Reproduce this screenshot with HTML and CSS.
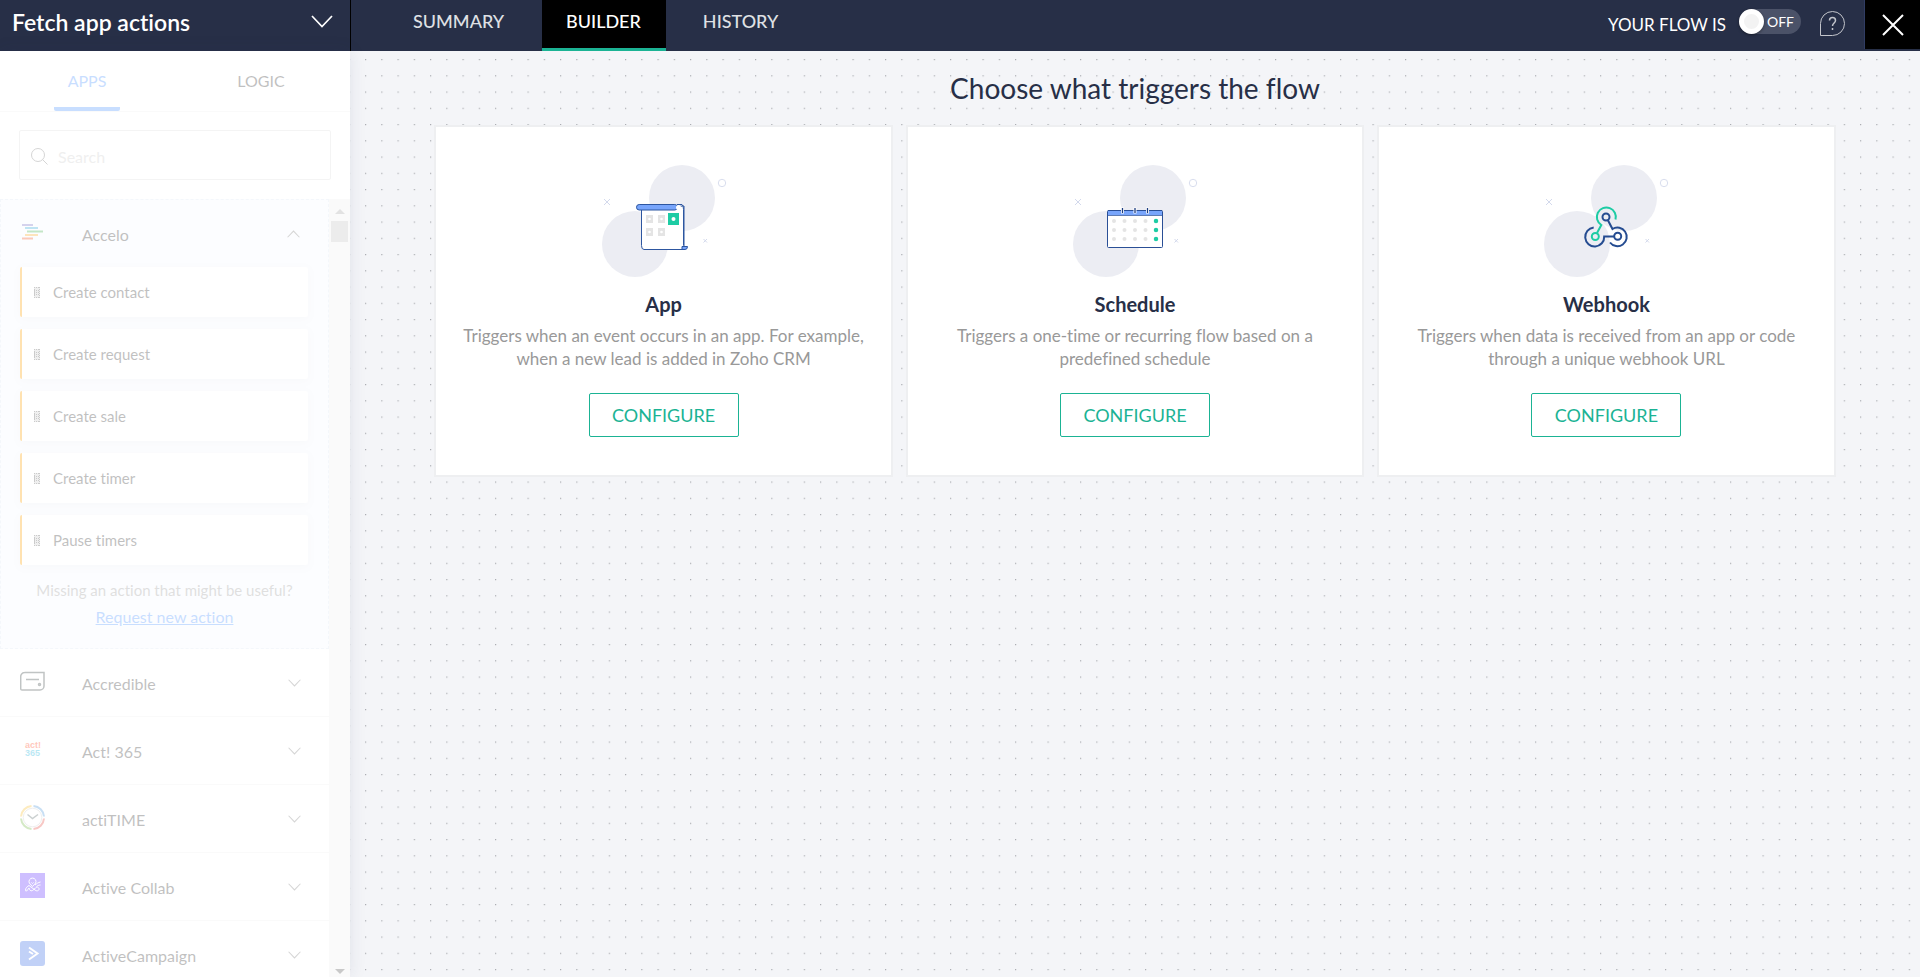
FILE: index.html
```
<!DOCTYPE html>
<html lang="en">
<head>
    <meta charset="UTF-8">
    <meta name="viewport" content="width=device-width, initial-scale=1.0">
    <title>Fetch app actions</title>
    <link rel="stylesheet" href="styles.css">
</head>
<body>

    <!-- shared shapes -->
    <svg class="sprite" aria-hidden="true">
        <symbol id="backdrop" viewBox="0 0 128 114">
            <circle cx="82" cy="34" r="33" fill="#ecedf3"/>
            <circle cx="35" cy="80" r="33" fill="#ecedf3"/>
            <circle cx="122" cy="19" r="3.7" fill="none" stroke="#d9deee"/>
            <path d="M4 35l6 6m0-6l-6 6M103.500 75l3.500 3.500m0-3.500l-3.500 3.500" fill="none" stroke="#d3d9ec"/>
        </symbol>
        <symbol id="arrow" viewBox="0 0 22 13">
            <path d="M1 1l10 10.500L21 1" fill="none" stroke="currentColor" stroke-width="1.700"/>
        </symbol>
        <symbol id="grip" viewBox="0 0 6 11">
            <path d="M0 0h6v11H0z" fill="#ccc"/>
            <path d="M0 .5h6M0 3.500h6M0 5.500h6M0 7.500h6M0 10.500h6M.5 0v11M5.500 0v11" fill="none" stroke="#555" stroke-dasharray="1 1"/>
        </symbol>
    </svg>

    <header class="topbar">
        <div class="flow-name">
            <h1>Fetch app actions</h1>
            <button class="icon-button" aria-label="Flow details"><svg class="name-arrow"><use href="#arrow"/></svg></button>
        </div>
        <nav class="main-tabs">
            <a href="#">SUMMARY</a>
            <a href="#" class="active">BUILDER</a>
            <a href="#">HISTORY</a>
        </nav>
        <div class="top-right">
            <span class="status-label" id="flow-status">YOUR FLOW IS</span>
            <label class="switch">
                <input type="checkbox" aria-labelledby="flow-status">
                <span class="switch-text">OFF</span>
            </label>
            <button class="icon-button" aria-label="Help">
                <svg class="help-icon" viewBox="0 0 25 25" fill="none" stroke="#c3c5cb">
                    <path d="M.5 24.500V12.500a12 12 0 1 1 12 12z"/>
                    <path d="M9.500 9.500c0-4 6-4 6 0 0 2.500-3 2.500-3 5.500M12.500 17v2" stroke-width="1.500"/>
                </svg>
            </button>
        </div>
        <button class="close-button" aria-label="Close">
            <svg class="close-icon" viewBox="0 0 22 22"><path d="M1 1l20 20M21 1L1 21" fill="none" stroke="#fff" stroke-width="2"/></svg>
        </button>
    </header>

    <div class="workspace">
        <aside class="sidebar">
            <div class="sidebar-inner">
                <div class="side-tabs">
                    <button class="side-tab active"><span>APPS</span></button>
                    <button class="side-tab"><span>LOGIC</span></button>
                </div>

                <label class="search">
                    <svg class="search-icon" viewBox="0 0 17 17" fill="none" stroke="#777"><circle cx="7" cy="7" r="6.500"/><path d="M11.500 11.500l5 5"/></svg>
                    <input type="text" placeholder="Search" aria-label="Search">
                </label>

                <div class="app-scroll">
                    <div class="app-list">
                        <section class="app-group">
                            <button class="app-row">
                                <svg class="app-icon" viewBox="0 0 25 25" fill="none" stroke-width="2">
                                    <path d="M2 5h11" stroke="#7771c4"/>
                                    <path d="M5 8h13" stroke="#2fa8d8"/>
                                    <path d="M7 11.500h16" stroke="#3fb04a"/>
                                    <path d="M5 15h13" stroke="#f9a825"/>
                                    <path d="M2 18.500h11" stroke="#f4511e"/>
                                </svg>
                                <span class="app-name">Accelo</span>
                                <svg class="row-arrow up"><use href="#arrow"/></svg>
                            </button>
                            <ul class="actions">
                                <li><svg class="grip"><use href="#grip"/></svg>Create contact</li>
                                <li><svg class="grip"><use href="#grip"/></svg>Create request</li>
                                <li><svg class="grip"><use href="#grip"/></svg>Create sale</li>
                                <li><svg class="grip"><use href="#grip"/></svg>Create timer</li>
                                <li><svg class="grip"><use href="#grip"/></svg>Pause timers</li>
                            </ul>
                            <p class="missing">Missing an action that might be useful?</p>
                            <a href="#" class="request">Request new action</a>
                        </section>

                        <button class="app-row">
                            <svg class="app-icon" viewBox="0 0 25 25" fill="none" stroke="#333f3f" stroke-width="1.500">
                                <path d="M4.500 3.500h19.500v13.500a4 4 0 0 1-4 4H2a1.300 1.300 0 0 1-1.300-1.300V7.500a4 4 0 0 1 4-4zM6 10.500h13"/>
                                <circle cx="19.500" cy="15.500" r="1"/>
                            </svg>
                            <span class="app-name">Accredible</span>
                            <svg class="row-arrow"><use href="#arrow"/></svg>
                        </button>
                        <button class="app-row">
                            <svg class="app-icon act" viewBox="0 0 25 25">
                                <text x="5" y="11" fill="#ff4a1c">act!</text>
                                <text x="5" y="19" fill="#19b4dc">365</text>
                            </svg>
                            <span class="app-name">Act! 365</span>
                            <svg class="row-arrow"><use href="#arrow"/></svg>
                        </button>
                        <button class="app-row">
                            <svg class="app-icon" viewBox="0 0 25 25" fill="none" stroke-width="2">
                                <path d="M13.500 1a11.500 11.500 0 0 1 10.500 10.500" stroke="#4d98db"/>
                                <path d="M24 13.500a11.500 11.500 0 0 1-10.500 10.500" stroke="#e84b43"/>
                                <path d="M11.500 24a11.500 11.500 0 0 1-10.500-10.500" stroke="#74b843"/>
                                <path d="M1 11.500a11.500 11.500 0 0 1 10.500-10.500" stroke="#fbc02d"/>
                                <circle cx="12.500" cy="12.500" r="9.300" stroke="#ccc" stroke-width="1"/>
                                <path d="M7.500 9.500l5 4 5.500-4" stroke="#566" stroke-width="1.500"/>
                            </svg>
                            <span class="app-name">actiTIME</span>
                            <svg class="row-arrow"><use href="#arrow"/></svg>
                        </button>
                        <button class="app-row">
                            <svg class="app-icon" viewBox="0 0 25 25" fill="none" stroke="#fff">
                                <path d="M0 0h25v25H0z" fill="#6130ff" stroke="none"/>
                                <path d="M12.500 13.500L9.300 10a3.500 3.500 0 1 1 6.400 0zM11.500 9.500l1 1 1-1M5.500 17.500c0-3 2-4 3.500-5l6 4.500c2.500 2 4.500 0 4-1.500-.8-2-2.800-1.500-4 0l-2.500 2c-2 1-3-.5-3.500-2.500-1.500 3-3.500 3.500-3.500 2.500zM15 12c2-1.500 3-2.500 5.500-3M16.500 13.500c1-.8 2.500-1.500 4-1.500"/>
                            </svg>
                            <span class="app-name">Active Collab</span>
                            <svg class="row-arrow"><use href="#arrow"/></svg>
                        </button>
                        <button class="app-row">
                            <svg class="app-icon" viewBox="0 0 25 25" fill="none" stroke="#fff" stroke-width="2">
                                <rect width="25" height="25" rx="3" fill="#356ae6" stroke="none"/>
                                <path d="M9 6.500l8.500 6L9 18.500M9 10.500l4 2.500"/>
                            </svg>
                            <span class="app-name">ActiveCampaign</span>
                            <svg class="row-arrow"><use href="#arrow"/></svg>
                        </button>
                    </div>
                    <div class="scrollbar" aria-hidden="true">
                        <div class="scroll-up"></div>
                        <div class="scroll-thumb"></div>
                        <div class="scroll-down"></div>
                    </div>
                </div>
            </div>
        </aside>

        <main class="canvas">
            <h2>Choose what triggers the flow</h2>
            <div class="triggers">
                <article class="trigger">
                    <svg class="art" viewBox="0 0 128 114">
                        <use href="#backdrop"/>
                        <path d="M41.500 44v37.500q0 4 2.500 4h40V42z" fill="#fff" stroke="#2d56a0"/>
                        <path d="M77 40.500h5q1.500 1 1.500 5v36" fill="none" stroke="#2d56a0"/>
                        <rect x="36.500" y="40.500" width="41" height="5.500" rx="2.700" fill="#78a5fb" stroke="#2d56a0"/>
                        <circle cx="78.500" cy="43.500" r="2.500" fill="#fff"/>
                        <path d="M82 82.500h5.500q0 3-2.500 3h-3z" fill="#78a5fb" stroke="#2d56a0"/>
                        <path d="M46 51h7v8h-7zM58 51h7v8h-7zM46 64h7v8h-7zM58 64h7v8h-7z" fill="#e4e4e4"/>
                        <path d="M68 49h11v12H68z" fill="#1dcca4"/>
                        <g fill="#fff">
                            <circle cx="49.500" cy="55" r="1.300"/><circle cx="61.500" cy="55" r="1.300"/>
                            <circle cx="49.500" cy="68" r="1.300"/><circle cx="61.500" cy="68" r="1.300"/>
                            <circle cx="73.500" cy="55" r="2"/>
                        </g>
                    </svg>
                    <h3>App</h3>
                    <p>Triggers when an event occurs in an app. For example, when a new lead is added in Zoho CRM</p>
                    <button class="configure">CONFIGURE</button>
                </article>

                <article class="trigger">
                    <svg class="art" viewBox="0 0 128 114">
                        <use href="#backdrop"/>
                        <rect x="36.500" y="46.500" width="55" height="37" rx="1" fill="#fff" stroke="#2a4f96"/>
                        <path d="M37 47h54v4.500H37z" fill="#78a5fb"/>
                        <path d="M37 46.500h54" stroke="#2a4f96"/>
                        <path d="M37 51.500h54" stroke="#5f7cb4"/>
                        <path d="M51.500 43.500v6M64 43.500v6M76.500 43.500v6" stroke="#fff" stroke-width="3"/>
                        <path d="M51.500 44v5M64 44v5M76.500 44v5" stroke="#1d3d80" stroke-width="1.300"/>
                        <path d="M43 57h32M43 66h32M43 75h32" stroke="#e4e4e4" stroke-width="4" stroke-linecap="round" stroke-dasharray="0 10.500"/>
                        <path d="M85 57v19" stroke="#1dcca4" stroke-width="4.500" stroke-linecap="round" stroke-dasharray="0 9"/>
                    </svg>
                    <h3>Schedule</h3>
                    <p>Triggers a one-time or recurring flow based on a predefined schedule</p>
                    <button class="configure">CONFIGURE</button>
                </article>

                <article class="trigger">
                    <svg class="art" viewBox="0 0 128 114">
                        <use href="#backdrop"/>
                        <g fill="none" stroke="#254c91" stroke-width="2">
                            <path d="M73.500 55.500a9.500 9.500 0 1 0-14.200 5.500l-4.300 8" stroke="#1dcca4"/>
                            <circle cx="53.300" cy="72.500" r="3.500" stroke="#1dcca4"/>
                            <circle cx="64" cy="53" r="3.500"/>
                            <circle cx="75.700" cy="72.300" r="3.500"/>
                            <path d="M51.700 63.500a9.500 9.500 0 1 0 10.500 9h10"/>
                            <path d="M68 78.500a9.300 9.300 0 1 0 2.500-13.500l-4.700-9"/>
                        </g>
                    </svg>
                    <h3>Webhook</h3>
                    <p>Triggers when data is received from an app or code through a unique webhook URL</p>
                    <button class="configure">CONFIGURE</button>
                </article>
            </div>
        </main>
    </div>

</body>
</html>
```

FILE: styles.css
```
* {
    margin: 0;
    padding: 0;
    box-sizing: border-box;
}

body {
    display: flex;
    flex-direction: column;
    height: 100vh;
    overflow: hidden;
    background-color: #f4f5f8;
    font-family: Lato, sans-serif;
    font-size: 16px;
    font-variant-ligatures: none;
    color: #333;
}

button {
    border: none;
    background: none;
    font: inherit;
    font-variant-ligatures: none;
    color: inherit;
    cursor: pointer;
}

svg {
    display: block;
    flex: none;
}

.sprite {
    position: absolute;
    width: 0;
    height: 0;
}

/* top bar */
.topbar {
    display: flex;
    flex: none;
    height: 51px;
    background-color: #272f47;
    color: #fff;
}

.flow-name {
    display: flex;
    justify-content: space-between;
    width: 351px;
    padding: 8px 17px 0 12px;
    border-right: 1px solid #000;
}

.flow-name h1 {
    font-size: 23px;
    line-height: 28px;
    font-weight: 600;
}

.flow-name .icon-button {
    height: 26px;
}

.name-arrow {
    width: 22px;
    height: 13px;
}

.main-tabs {
    display: flex;
    gap: 13px;
    padding-left: 38px;
}

.main-tabs a {
    padding: 9px 25px 0 24px;
    border-bottom: 3px solid transparent;
    color: #dfe0e4;
    font-size: 18px;
    line-height: 24px;
    font-weight: 500;
    text-decoration: none;
}

.main-tabs a.active {
    background-color: #000;
    border-color: #1bb394;
    color: #fff;
}

.top-right {
    display: flex;
    align-items: flex-start;
    margin-left: auto;
    padding: 9px 19px 0 0;
}

.status-label {
    margin-right: 13px;
    font-size: 17px;
    line-height: 32px;
}

.switch {
    display: flex;
    align-items: center;
    width: 62px;
    height: 25px;
    margin-right: 19px;
    border-radius: 13px;
    background-color: #4b5268;
}

.switch input {
    appearance: none;
    width: 25px;
    height: 25px;
    border: 5px solid #fff;
    border-radius: 50%;
    background-color: #f3f3f3;
    box-shadow: 0 1px 3px rgba(0, 0, 0, 0.4);
}

.switch-text {
    padding-left: 3px;
    font-size: 14px;
}

.help-icon {
    width: 25px;
    height: 25px;
    margin-top: 2px;
}

.close-button {
    width: 56px;
    height: 49px;
    padding-left: 17px;
    border-left: 1px solid #303c63;
    background-color: #000;
}

.close-icon {
    width: 22px;
    height: 22px;
}

.workspace {
    display: flex;
    flex: 1;
    min-height: 0;
}

/* sidebar, faded until a trigger is chosen */
.sidebar {
    width: 350px;
    flex: none;
    background-color: #fff;
    box-shadow: 0 0 16px rgba(40, 50, 100, 0.1);
}

.sidebar-inner {
    display: flex;
    flex-direction: column;
    height: 100%;
    opacity: 0.3;
}

.side-tabs {
    display: flex;
    height: 61px;
    padding-right: 2px;
    border-bottom: 1px solid #f0f0f0;
}

.side-tab {
    flex: 1;
    display: flex;
    justify-content: center;
}

.side-tab span {
    padding: 0 14px;
    line-height: 60px;
}

.side-tab.active span {
    color: #4d94ff;
    height: 60px;
    border-bottom: 4px solid #4d94ff;
    border-radius: 2px;
}

.search {
    display: flex;
    align-items: center;
    gap: 10px;
    height: 50px;
    margin: 18px 19px 19px;
    padding: 3px 11px 0;
    border: 1px solid #ddd;
    border-radius: 2px;
}

.search-icon {
    width: 17px;
    height: 17px;
}

.search input {
    flex: 1;
    min-width: 0;
    border: none;
    outline: none;
    font: inherit;
    line-height: 24px;
}

.search input::placeholder {
    color: #ccc;
}

.app-scroll {
    display: flex;
    flex: 1;
    min-height: 0;
}

.app-list {
    flex: 1;
    overflow: hidden;
}

.app-group {
    height: 450px;
    border: 1px dashed #dce8f5;
    background-color: #f6f9ff;
    text-align: center;
}

.app-row {
    display: flex;
    align-items: center;
    width: 100%;
    height: 68px;
    padding: 1px 28px 0 20px;
    border-bottom: 1px solid #f0f0f0;
    text-align: left;
}

.app-group .app-row {
    height: 67px;
    padding: 1px 28px 0 19px;
    border-bottom: none;
}

.app-icon {
    width: 25px;
    height: 25px;
    margin-bottom: 4px;
}

.act text {
    font-family: "Liberation Sans", sans-serif;
    font-size: 9px;
    font-weight: bold;
}

.app-name {
    flex: 1;
    padding-left: 37px;
}

.row-arrow {
    width: 13px;
    height: 8px;
    color: #777;
}

.row-arrow.up {
    transform: rotate(180deg);
}

.actions {
    display: flex;
    flex-direction: column;
    gap: 12px;
    padding: 0 20px 0 19px;
    list-style: none;
}

.actions li {
    display: flex;
    align-items: center;
    gap: 13px;
    height: 50px;
    padding-left: 12px;
    border-left: 2px solid #ffa000;
    border-radius: 2px;
    background-color: #fff;
    box-shadow: 0 2px 8px rgba(0, 0, 0, 0.06);
    font-size: 15px;
}

.grip {
    width: 6px;
    height: 11px;
}

.missing {
    margin-top: 12px;
    color: #999;
    font-size: 15px;
    line-height: 26px;
}

.request {
    color: #4d94ff;
    line-height: 28px;
}

.scrollbar {
    display: flex;
    flex-direction: column;
    align-items: center;
    width: 21px;
    padding: 10px 0 3px;
    background-color: #f1f1f1;
}

.scroll-up, .scroll-down {
    border: 5px solid transparent;
}

.scroll-up {
    border-top-width: 0;
    border-bottom-color: #a3a3a3;
}

.scroll-thumb {
    width: 17px;
    height: 21px;
    margin-top: 7px;
    background-color: #c1c1c1;
}

.scroll-down {
    margin-top: auto;
    border-bottom-width: 0;
    border-top-color: #505050;
}

/* dotted canvas */
.canvas {
    flex: 1;
    padding-top: 19px;
    background-image: url("data:image/svg+xml,%3Csvg xmlns='http://www.w3.org/2000/svg' width='65' height='65'%3E%3Cdefs%3E%3Cpattern id='d' width='16.25' height='16.25' patternUnits='userSpaceOnUse'%3E%3Cpath d='M0 0h1.2v1.2H0z' fill='%23a9abb0'/%3E%3C/pattern%3E%3C/defs%3E%3Cpath d='M0 0h65v65H0z' fill='url(%23d)'/%3E%3C/svg%3E");
    background-position: 15px 8px;
    text-align: center;
}

.canvas h2 {
    color: #272f47;
    font-size: 28px;
    line-height: 36px;
    font-weight: 400;
}

.triggers {
    display: flex;
    gap: 17px;
    width: 89%;
    margin: 21px auto 0;
}

.trigger {
    display: flex;
    flex: 1;
    flex-direction: column;
    align-items: center;
    padding: 37px 24px 38px;
    background-color: #fff;
    box-shadow: 0 0 0 2px #eeeff1;
}

.art {
    width: 128px;
    height: 114px;
}

.trigger h3 {
    margin-top: 12px;
    color: #272f47;
    font-size: 20px;
    line-height: 28px;
}

.trigger p {
    margin: 6px 0 23px;
    color: #999;
    font-size: 17px;
    line-height: 23px;
}

.configure {
    width: 150px;
    height: 44px;
    border: 1px solid #1bb394;
    border-radius: 2px;
    color: #1bb394;
    font-size: 18px;
}
```
